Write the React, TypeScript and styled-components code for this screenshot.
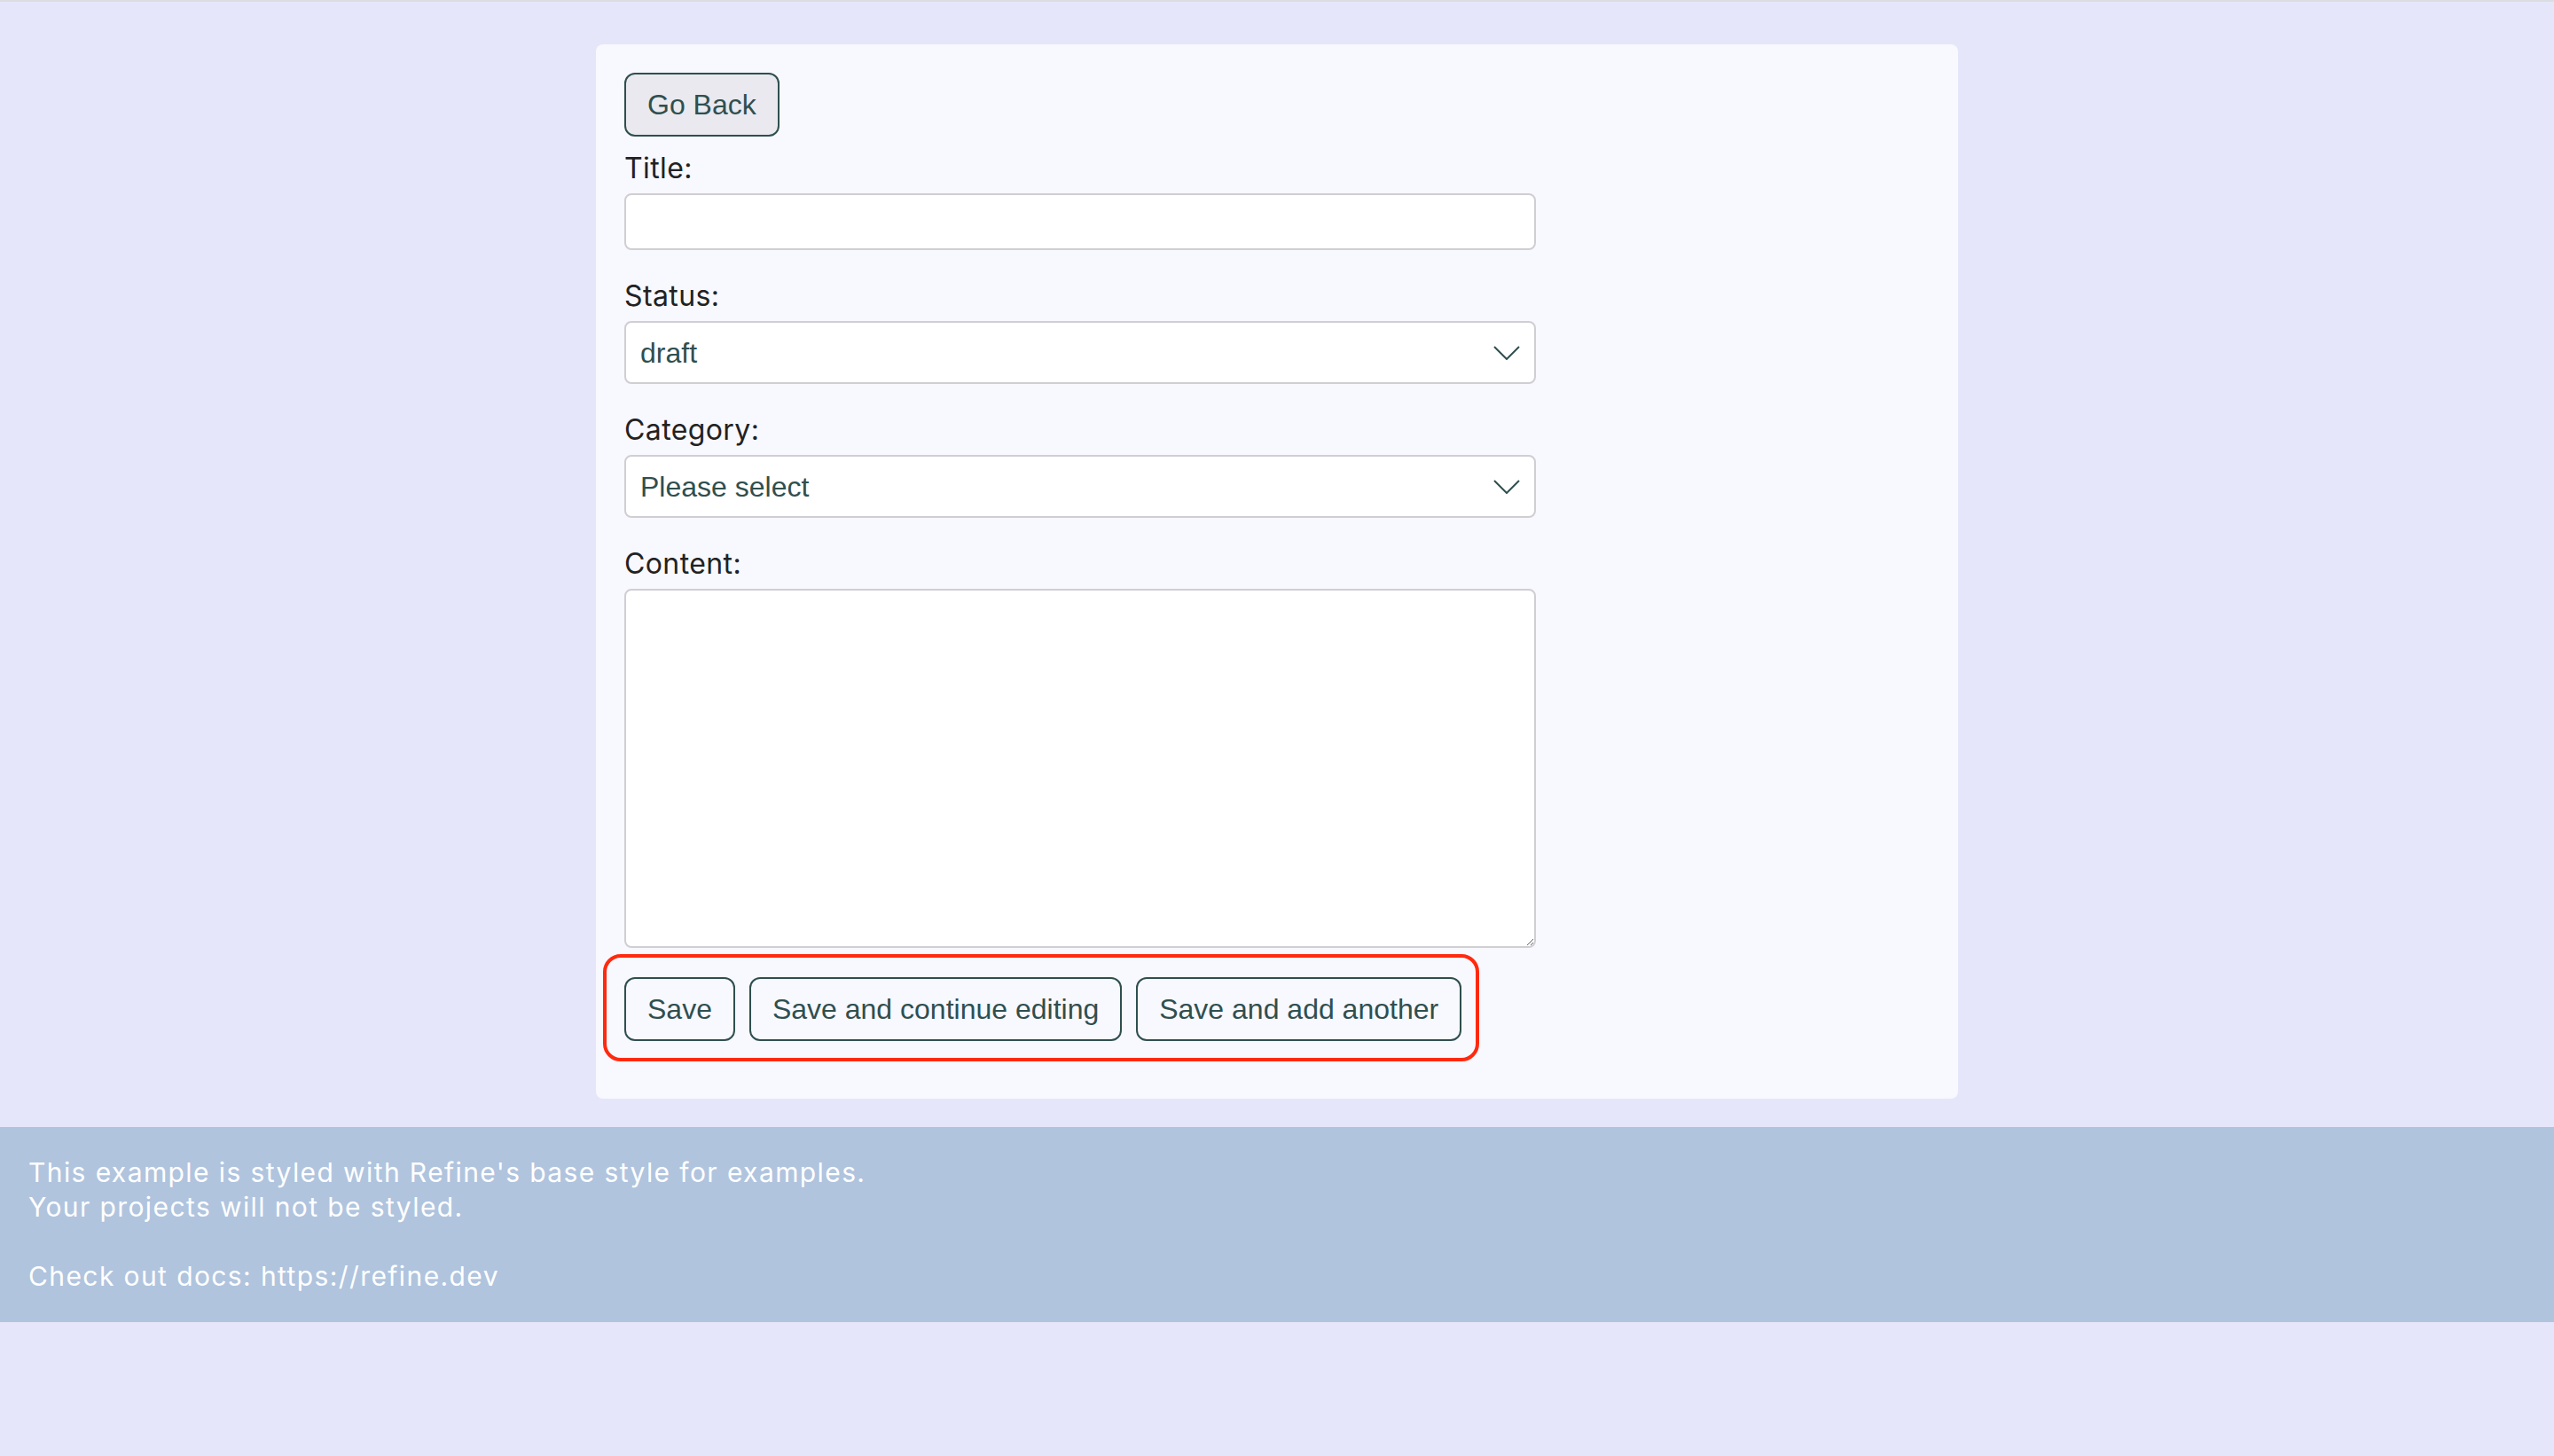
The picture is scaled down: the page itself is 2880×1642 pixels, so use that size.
import React from "react";
import styled, { createGlobalStyle } from "styled-components";

const GlobalStyle = createGlobalStyle`
  html, body {
    margin: 0;
    padding: 0;
  }
  body {
    background: #e6e6fa;
    border-top: 2px solid #dcdce3;
    font-family: Inter, "Open Sans", sans-serif;
    color: #222;
    min-height: 1640px;
  }
  * { box-sizing: border-box; }
`;

const Main = styled.main`
  padding-top: 48px;
`;

const Card = styled.div`
  width: 1536px;
  margin: 0 auto;
  background: #f8f8ff;
  border-radius: 8px;
  padding: 32px 32px 65px;
`;

const Form = styled.form`
  width: 1028px;
  display: flex;
  flex-direction: column;
  align-items: flex-start;
`;

const Button = styled.button<{ $muted?: boolean }>`
  font-family: "Liberation Sans", Arial, sans-serif;
  font-size: 32px;
  line-height: 36px;
  color: #2f4f4f;
  background: ${(p) => (p.$muted ? "#e9e9ef" : "transparent")};
  border: 2px solid #2f4f4f;
  border-radius: 12px;
  padding: 16px 24px;
  cursor: pointer;
  white-space: nowrap;
`;

const Field = styled.div<{ $first?: boolean }>`
  width: 100%;
  display: flex;
  flex-direction: column;
  gap: 8px;
  margin-top: ${(p) => (p.$first ? "16px" : "32px")};
`;

const Label = styled.label`
  display: block;
  font-size: 32px;
  line-height: 40px;
  letter-spacing: 0.4px;
  color: #222;
`;

const TextInput = styled.input`
  width: 100%;
  height: 64px;
  border: 2px solid #cfcfd3;
  border-radius: 8px;
  background: #fff;
  font-family: "Liberation Sans", Arial, sans-serif;
  font-size: 32px;
  color: #2f4f4f;
  padding: 0 16px;
  outline: none;
`;

const SelectWrap = styled.div`
  position: relative;
  width: 100%;
`;

const Select = styled.select`
  width: 100%;
  height: 71px;
  appearance: none;
  -webkit-appearance: none;
  border: 2px solid #cfcfd3;
  border-radius: 8px;
  background: #fff;
  font-family: "Liberation Sans", Arial, sans-serif;
  font-size: 32px;
  color: #2f4f4f;
  padding: 0 16px;
  outline: none;
`;

const Chevron = styled.svg`
  position: absolute;
  right: 18px;
  top: 50%;
  transform: translateY(-50%);
  pointer-events: none;
`;

const TextArea = styled.textarea`
  width: 100%;
  height: 405px;
  border: 2px solid #cfcfd3;
  border-radius: 8px;
  background: #fff;
  font-family: "Liberation Sans", Arial, sans-serif;
  font-size: 32px;
  color: #2f4f4f;
  padding: 12px 16px;
  resize: vertical;
  outline: none;
  display: block;
`;

const Actions = styled.div`
  position: relative;
  display: flex;
  gap: 16px;
  margin-top: 33px;

  &::after {
    content: "";
    position: absolute;
    top: -26px;
    left: -24px;
    right: -20px;
    bottom: -23px;
    border: 4px solid #ff2a0f;
    border-radius: 20px;
    pointer-events: none;
  }
`;

const Footer = styled.footer`
  margin-top: 32px;
  background: #b0c4de;
  color: #fff;
  padding: 32px;
  font-size: 30px;
  line-height: 39px;
  letter-spacing: 1.4px;
`;

const FooterLine = styled.div`
  min-height: 39px;
`;

const ChevronIcon = () => (
  <Chevron width="30" height="16" viewBox="0 0 30 16" fill="none">
    <path d="M1 1 L15 15 L29 1" stroke="#2f4f4f" strokeWidth="2" />
  </Chevron>
);

export default function App() {
  return (
    <>
      <GlobalStyle />
      <Main>
        <Card>
          <Form onSubmit={(e) => e.preventDefault()}>
            <Button type="button" $muted>
              Go Back
            </Button>
            <Field $first>
              <Label htmlFor="title">Title:</Label>
              <TextInput id="title" type="text" />
            </Field>
            <Field>
              <Label htmlFor="status">Status:</Label>
              <SelectWrap>
                <Select id="status" defaultValue="draft">
                  <option value="published">published</option>
                  <option value="draft">draft</option>
                  <option value="rejected">rejected</option>
                </Select>
                <ChevronIcon />
              </SelectWrap>
            </Field>
            <Field>
              <Label htmlFor="category">Category:</Label>
              <SelectWrap>
                <Select id="category" defaultValue="">
                  <option value="">Please select</option>
                </Select>
                <ChevronIcon />
              </SelectWrap>
            </Field>
            <Field>
              <Label htmlFor="content">Content:</Label>
              <TextArea id="content" />
            </Field>
            <Actions>
              <Button type="submit">Save</Button>
              <Button type="button">Save and continue editing</Button>
              <Button type="button">Save and add another</Button>
            </Actions>
          </Form>
        </Card>
        <Footer>
          <FooterLine>This example is styled with Refine's base style for examples.</FooterLine>
          <FooterLine>Your projects will not be styled.</FooterLine>
          <FooterLine />
          <FooterLine>Check out docs: https://refine.dev</FooterLine>
        </Footer>
      </Main>
    </>
  );
}
